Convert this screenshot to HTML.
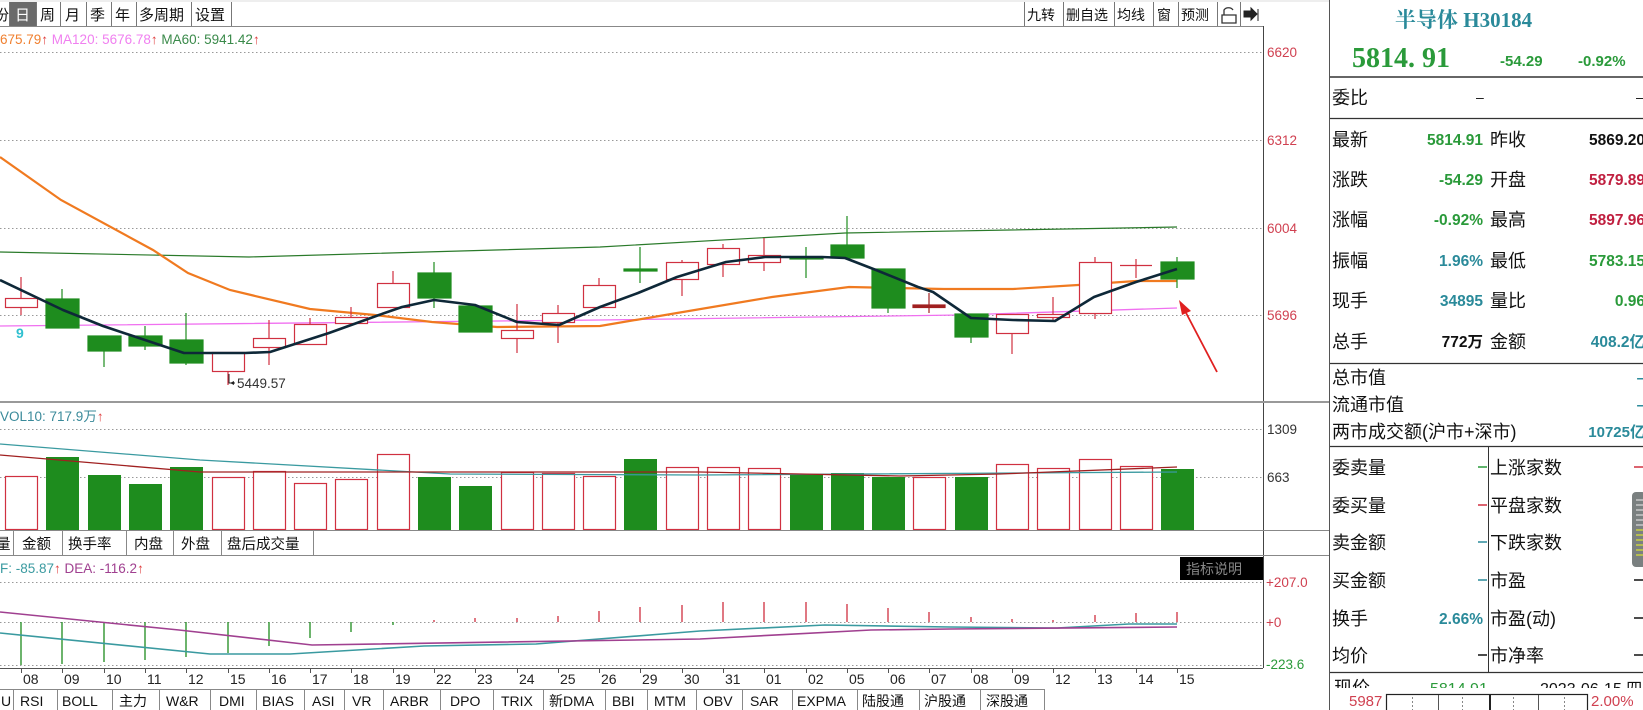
<!DOCTYPE html>
<html><head><meta charset="utf-8"><style>
html,body{margin:0;padding:0;background:#fff;width:1643px;height:710px;overflow:hidden}
svg{display:block}
.s{font-family:"Liberation Sans","Noto Sans CJK SC",sans-serif}
.c{font-family:"Liberation Sans","Noto Sans CJK SC",sans-serif}
</style></head><body>
<svg width="1643" height="710" viewBox="0 0 1643 710" xmlns="http://www.w3.org/2000/svg" class="s">
<rect x="0" y="0" width="1643" height="710" fill="#fff"/>
<rect x="0" y="0" width="1329" height="2" fill="#eee"/>
<!-- toolbar -->
<g font-size="15" fill="#111">
<rect x="10" y="2" width="26" height="24" fill="#6a6a6a"/>
<g stroke="#777" fill="none"><path d="M9.5 2v24M36.5 2v24M60.5 2v24M86.5 2v24M111.5 2v24M136.5 2v24M191.5 2v24M231.5 2v24M1024.5 2v24M1063.5 2v24M1114.5 2v24M1153.5 2v24M1178.5 2v24M1217.5 2v24M1240.5 2v24"/></g>
<text x="-6" y="20">份</text>
<text x="15" y="20" fill="#fff">日</text>
<text x="40" y="20">周</text>
<text x="65" y="20">月</text>
<text x="90" y="20">季</text>
<text x="115" y="20">年</text>
<text x="139" y="20">多周期</text>
<text x="195" y="20">设置</text>
<text x="1027" y="20" font-size="14">九转</text>
<text x="1066" y="20" font-size="14">删自选</text>
<text x="1117" y="20" font-size="14">均线</text>
<text x="1157" y="20" font-size="14">窗</text>
<text x="1181" y="20" font-size="14">预测</text>
</g>
<path d="M1222 23v-8h14v8zM1224 15v-5a5 4 0 0 1 9 0" fill="none" stroke="#333" stroke-width="1.3"/>
<path d="M1244 11h7v-3l6 6-6 6v-3h-7z M1258 9v12" fill="#222" stroke="#222" stroke-width="1"/>
<line x1="0" y1="26.5" x2="1263" y2="26.5" stroke="#888"/>
<line x1="1263.5" y1="26" x2="1263.5" y2="668" stroke="#444"/>
<!-- legend -->
<text x="0" y="44" font-size="13.5"><tspan fill="#f08030">675.79</tspan><tspan fill="#e04040">↑</tspan><tspan fill="#f080f0"> MA120: 5676.78</tspan><tspan fill="#e04040">↑</tspan><tspan fill="#3a8a4a"> MA60: 5941.42</tspan><tspan fill="#e04040">↑</tspan></text>
<!-- grid -->
<g stroke="#999" stroke-dasharray="1.5 2.5" stroke-width="1">
<line x1="0" y1="52.5" x2="1263" y2="52.5"/><line x1="0" y1="140.5" x2="1263" y2="140.5"/><line x1="0" y1="228.5" x2="1263" y2="228.5"/><line x1="0" y1="315.5" x2="1263" y2="315.5"/>
<line x1="0" y1="429.5" x2="1263" y2="429.5"/><line x1="0" y1="477.5" x2="1263" y2="477.5"/>
<line x1="0" y1="582.5" x2="1263" y2="582.5"/><line x1="0" y1="622.5" x2="1263" y2="622.5"/><line x1="0" y1="665.5" x2="1263" y2="665.5"/>
</g>
<g font-size="13.5" fill="#d04050">
<text x="1267" y="57">6620</text><text x="1267" y="145">6312</text><text x="1267" y="233">6004</text><text x="1267" y="320">5696</text>
</g>
<!-- MA lines -->
<polyline fill="none" stroke="#2a7a2a" stroke-width="1.2" points="0,252 249,257 600,247 845,233 1177,227"/>
<polyline fill="none" stroke="#f070f0" stroke-width="1.3" points="0,326 600,320 960,315 1177,308"/>
<polyline fill="none" stroke="#f07a20" stroke-width="2.2" points="0,157 61,200 153,250 188,273 230,290 310,309 375,315 432,322 497,327 600,326 677,313 772,297 849,287 944,289 1013,289 1078,285 1136,281 1177,281"/>
<!-- candles -->
<g stroke-width="1.2">
<g stroke="#d03040" fill="#fff">
<line x1="21" y1="277" x2="21" y2="315"/><rect x="5.5" y="298.5" width="32" height="9"/>
<line x1="228" y1="352" x2="228" y2="385"/><rect x="212.5" y="352.5" width="32" height="19"/>
<line x1="269" y1="320" x2="269" y2="365"/><rect x="253.5" y="338.5" width="32" height="9"/>
<line x1="310" y1="318" x2="310" y2="344"/><rect x="294.5" y="324.5" width="32" height="20"/>
<line x1="351" y1="307" x2="351" y2="324"/><rect x="335.5" y="317.5" width="32" height="6"/>
<line x1="393" y1="271" x2="393" y2="307"/><rect x="377.5" y="283.5" width="32" height="24"/>
<line x1="517" y1="304" x2="517" y2="353"/><rect x="501.5" y="330.5" width="32" height="8"/>
<line x1="558" y1="305" x2="558" y2="343"/><rect x="542.5" y="313.5" width="32" height="9"/>
<line x1="599" y1="278" x2="599" y2="307"/><rect x="583.5" y="285.5" width="32" height="22"/>
<line x1="682" y1="260" x2="682" y2="296"/><rect x="666.5" y="262.5" width="32" height="17"/>
<line x1="723" y1="244" x2="723" y2="277"/><rect x="707.5" y="248.5" width="32" height="16"/>
<line x1="764" y1="238" x2="764" y2="271"/><rect x="748.5" y="255.5" width="32" height="7"/>
<line x1="1012" y1="314" x2="1012" y2="354"/><rect x="996.5" y="314.5" width="32" height="19"/>
<line x1="1053" y1="297" x2="1053" y2="320"/><rect x="1037.5" y="314.5" width="32" height="3"/>
<line x1="1095" y1="257" x2="1095" y2="319"/><rect x="1079.5" y="262.5" width="32" height="51"/>
<line x1="1136" y1="259" x2="1136" y2="278"/><line x1="1120" y1="265.5" x2="1152" y2="265.5"/>
</g>
<g stroke="#a02020" fill="#a02020"><line x1="929" y1="293" x2="929" y2="313"/><rect x="913" y="305" width="32" height="2.5"/></g>
<g stroke="#1e8c1e" fill="#1e8c1e">
<line x1="62" y1="289" x2="62" y2="328"/><rect x="46" y="299" width="33" height="29"/>
<line x1="104" y1="336" x2="104" y2="367"/><rect x="88" y="336" width="33" height="15"/>
<line x1="145" y1="326" x2="145" y2="350"/><rect x="129" y="336" width="33" height="10"/>
<line x1="186" y1="313" x2="186" y2="365"/><rect x="170" y="340" width="33" height="23"/>
<line x1="434" y1="262" x2="434" y2="308"/><rect x="418" y="273" width="33" height="25"/>
<line x1="475" y1="306" x2="475" y2="332"/><rect x="459" y="306" width="33" height="26"/>
<line x1="640" y1="247" x2="640" y2="283"/><rect x="624" y="269" width="33" height="2"/>
<line x1="806" y1="247" x2="806" y2="278"/><rect x="790" y="257" width="33" height="2"/>
<line x1="847" y1="216" x2="847" y2="245"/><rect x="831" y="245" width="33" height="13"/>
<line x1="888" y1="269" x2="888" y2="313"/><rect x="872" y="269" width="33" height="39"/>
<line x1="971" y1="314" x2="971" y2="343"/><rect x="955" y="314" width="33" height="23"/>
<line x1="1177" y1="257" x2="1177" y2="288"/><rect x="1161" y="262" width="33" height="17"/>
</g>
</g>
<polyline fill="none" stroke="#0e2838" stroke-width="2.6" stroke-linejoin="round" points="0,280 63,310 103,326 184,353 245,353 270,352 329,333 379,315 402,307 434,300 475,305 517,322 559,325 600,307 638,293 677,277 726,262 765,257 822,257 845,258 876,270 918,287 933,292 971,318 1013,320 1055,321 1094,297 1136,282 1177,269"/>
<text x="16" y="338" font-size="14" fill="#30c0d0" font-weight="bold">9</text>
<path d="M229 374v9h6" fill="none" stroke="#222" stroke-width="1"/><path d="M230 383l4 -2v4z" fill="#222"/>
<text x="237" y="388" font-size="13.5" fill="#333">5449.57</text>
<!-- arrow -->
<line x1="1217" y1="372" x2="1184" y2="309" stroke="#e02020" stroke-width="1.8"/>
<path d="M1179 300l12 11-9 4z" fill="#e02020"/>
<!-- volume panel -->
<line x1="0" y1="402" x2="1329" y2="402" stroke="#999" stroke-width="2"/>
<text x="0" y="421" font-size="13.5" fill="#3a8a9a">VOL10: 717.9万<tspan fill="#e04040">↑</tspan></text>
<text x="1267" y="434" font-size="13.5" fill="#333">1309</text>
<text x="1267" y="482" font-size="13.5" fill="#333">663</text>
<g stroke-width="1.2">
<g stroke="#d03040" fill="#fff">
<rect x="5.5" y="476.5" width="32" height="53"/><rect x="212.5" y="477.5" width="32" height="52"/><rect x="253.5" y="471.5" width="32" height="58"/><rect x="294.5" y="483.5" width="32" height="46"/><rect x="335.5" y="479.5" width="32" height="50"/><rect x="377.5" y="454.5" width="32" height="75"/><rect x="501.5" y="472.5" width="32" height="57"/><rect x="542.5" y="473.5" width="32" height="56"/><rect x="583.5" y="476.5" width="32" height="53"/><rect x="666.5" y="467.5" width="32" height="62"/><rect x="707.5" y="467.5" width="32" height="62"/><rect x="748.5" y="468.5" width="32" height="61"/><rect x="913.5" y="477.5" width="32" height="52"/><rect x="996.5" y="464.5" width="32" height="65"/><rect x="1037.5" y="468.5" width="32" height="61"/><rect x="1079.5" y="459.5" width="32" height="70"/><rect x="1120.5" y="466.5" width="32" height="63"/>
</g>
<g fill="#1e8c1e">
<rect x="46" y="457" width="33" height="73"/><rect x="88" y="475" width="33" height="55"/><rect x="129" y="484" width="33" height="46"/><rect x="170" y="467" width="33" height="63"/><rect x="418" y="477" width="33" height="53"/><rect x="459" y="486" width="33" height="44"/><rect x="624" y="459" width="33" height="71"/><rect x="790" y="475" width="33" height="55"/><rect x="831" y="473" width="33" height="57"/><rect x="872" y="477" width="33" height="53"/><rect x="955" y="477" width="33" height="53"/><rect x="1161" y="469" width="33" height="61"/>
</g>
</g>
<polyline fill="none" stroke="#3a9aa0" stroke-width="1.3" points="0,444 200,460 450,474 700,475 1177,472"/>
<polyline fill="none" stroke="#a02020" stroke-width="1.3" points="0,455 200,472 700,472 900,476 1000,474 1177,467"/>
<line x1="0" y1="530.5" x2="1329" y2="530.5" stroke="#888"/>
<!-- vol tabs -->
<line x1="0" y1="555.5" x2="1329" y2="555.5" stroke="#888"/>
<g font-size="14.5" fill="#111">
<g stroke="#888"><path d="M13.5 531v24M62.5 531v24M126.5 531v24M173.5 531v24M221.5 531v24M313.5 531v24"/></g>
<text x="-4" y="549">量</text><text x="22" y="549">金额</text><text x="68" y="549">换手率</text><text x="134" y="549">内盘</text><text x="181" y="549">外盘</text><text x="227" y="549">盘后成交量</text>
</g>
<!-- MACD -->
<text x="0" y="573" font-size="13.5"><tspan fill="#3a9aa0">F: -85.87</tspan><tspan fill="#e04040">↑</tspan><tspan fill="#a04090"> DEA: -116.2</tspan><tspan fill="#e04040">↑</tspan></text>
<rect x="1180" y="557" width="83" height="23" fill="#000"/>
<text x="1186" y="574" font-size="14" fill="#888">指标说明</text>
<g font-size="13.5"><text x="1266" y="587" fill="#d04050">+207.0</text><text x="1266" y="627" fill="#d04050">+0</text><text x="1266" y="669" fill="#2a9a3a">-223.6</text></g>
<g stroke-width="1.3">
<g stroke="#1e8c1e"><path d="M21 622V665M62 622V664M104 622V662M145 622V660M186 622V657M228 622V653M269 622V646M310 622V638M351 622V632M393 622V625"/></g>
<g stroke="#d03040"><path d="M434 622V620M475 622V618M517 622V618M558 622V616M599 622V611M640 622V607M682 622V605M723 622V602M764 622V602M806 622V602M847 622V604M888 622V608M929 622V612M971 622V617M1012 622V619M1053 622V620M1095 622V615M1136 622V613M1177 622V612"/></g>
</g>
<polyline fill="none" stroke="#3a9aa0" stroke-width="1.6" points="0,633 210,654 290,654 424,646 536,644 700,631 825,625 950,627 1057,628 1129,624 1177,624"/>
<polyline fill="none" stroke="#a04090" stroke-width="1.6" points="0,612 179,630 312,645 700,639 871,630 950,629 1177,627"/>
<line x1="0" y1="668.5" x2="1263" y2="668.5" stroke="#555"/>
<!-- dates -->
<g stroke="#555"><path d="M21.5 669v4M62.5 669v4M104.5 669v4M145.5 669v4M186.5 669v4M228.5 669v4M269.5 669v4M310.5 669v4M351.5 669v4M393.5 669v4M434.5 669v4M475.5 669v4M517.5 669v4M558.5 669v4M599.5 669v4M640.5 669v4M682.5 669v4M723.5 669v4M764.5 669v4M806.5 669v4M847.5 669v4M888.5 669v4M929.5 669v4M971.5 669v4M1012.5 669v4M1053.5 669v4M1095.5 669v4M1136.5 669v4M1177.5 669v4"/></g>
<g font-size="14" fill="#222">
<text x="23" y="684">08</text><text x="64" y="684">09</text><text x="106" y="684">10</text><text x="147" y="684">11</text><text x="188" y="684">12</text><text x="230" y="684">15</text><text x="271" y="684">16</text><text x="312" y="684">17</text><text x="353" y="684">18</text><text x="395" y="684">19</text><text x="436" y="684">22</text><text x="477" y="684">23</text><text x="519" y="684">24</text><text x="560" y="684">25</text><text x="601" y="684">26</text><text x="642" y="684">29</text><text x="684" y="684">30</text><text x="725" y="684">31</text><text x="766" y="684">01</text><text x="808" y="684">02</text><text x="849" y="684">05</text><text x="890" y="684">06</text><text x="931" y="684">07</text><text x="973" y="684">08</text><text x="1014" y="684">09</text><text x="1055" y="684">12</text><text x="1097" y="684">13</text><text x="1138" y="684">14</text><text x="1179" y="684">15</text>
</g>
<!-- bottom tabs -->
<line x1="0" y1="689.5" x2="1045" y2="689.5" stroke="#888"/>
<g stroke="#888"><path d="M13.5 690v20M57.5 690v20M112.5 690v20M159.5 690v20M210.5 690v20M256.5 690v20M304.5 690v20M344.5 690v20M383.5 690v20M440.5 690v20M493.5 690v20M543.5 690v20M605.5 690v20M647.5 690v20M696.5 690v20M742.5 690v20M792.5 690v20M857.5 690v20M919.5 690v20M980.5 690v20M1044.5 690v20"/></g>
<g font-size="14" fill="#111">
<text x="1" y="706">U</text><text x="20" y="706">RSI</text><text x="62" y="706">BOLL</text><text x="119" y="706">主力</text><text x="166" y="706">W&amp;R</text><text x="219" y="706">DMI</text><text x="262" y="706">BIAS</text><text x="312" y="706">ASI</text><text x="352" y="706">VR</text><text x="390" y="706">ARBR</text><text x="450" y="706">DPO</text><text x="501" y="706">TRIX</text><text x="549" y="706">新DMA</text><text x="612" y="706">BBI</text><text x="654" y="706">MTM</text><text x="703" y="706">OBV</text><text x="750" y="706">SAR</text><text x="797" y="706">EXPMA</text><text x="862" y="706">陆股通</text><text x="924" y="706">沪股通</text><text x="986" y="706">深股通</text>
</g>
<!-- right panel -->
<line x1="1329.5" y1="0" x2="1329.5" y2="710" stroke="#555"/>
<text x="1395" y="27" font-size="21" font-weight="bold" fill="#2a8a9a" font-family="'Liberation Serif','Noto Serif CJK SC',serif">半导体 H30184</text>
<text x="1352" y="67" font-size="28" fill="#2a9a3a" font-family="'Liberation Serif','Noto Serif CJK SC',serif" font-weight="bold">5814. 91</text>
<text x="1500" y="66" font-size="15" fill="#2a9a3a" font-weight="bold">-54.29</text>
<text x="1578" y="66" font-size="15" fill="#2a9a3a" font-weight="bold">-0.92%</text>
<line x1="1330" y1="77" x2="1643" y2="77" stroke="#333" stroke-width="1.5"/>
<g font-size="18" fill="#111">
<text x="1332" y="104">委比</text>
<text x="1476" y="102" font-size="14">–</text><text x="1636" y="102" font-size="14">–</text>
</g>
<line x1="1330" y1="118.5" x2="1643" y2="118.5" stroke="#333" stroke-width="1.2"/>
<g font-size="18" fill="#111">
<text x="1332" y="146">最新</text><text x="1490" y="146">昨收</text>
<text x="1332" y="186">涨跌</text><text x="1490" y="186">开盘</text>
<text x="1332" y="226">涨幅</text><text x="1490" y="226">最高</text>
<text x="1332" y="267">振幅</text><text x="1490" y="267">最低</text>
<text x="1332" y="307">现手</text><text x="1490" y="307">量比</text>
<text x="1332" y="348">总手</text><text x="1490" y="348">金额</text>
</g>
<g font-size="15.5" font-weight="bold" text-anchor="end">
<text x="1483" y="145" fill="#2a9a3a">5814.91</text><text x="1645" y="145" fill="#111">5869.20</text>
<text x="1483" y="185" fill="#2a9a3a">-54.29</text><text x="1645" y="185" fill="#c02040">5879.89</text>
<text x="1483" y="225" fill="#2a9a3a">-0.92%</text><text x="1645" y="225" fill="#c02040">5897.96</text>
<text x="1483" y="266" fill="#2a8a9a">1.96%</text><text x="1645" y="266" fill="#2a9a3a">5783.15</text>
<text x="1483" y="306" fill="#2a8a9a">34895</text><text x="1645" y="306" fill="#2a9a3a">0.96</text>
<text x="1483" y="347" fill="#111">772万</text><text x="1645" y="347" fill="#2a8a9a">408.2亿</text>
</g>
<line x1="1330" y1="363.5" x2="1643" y2="363.5" stroke="#333" stroke-width="1.2"/>
<g font-size="18" fill="#111">
<text x="1332" y="384">总市值</text>
<text x="1332" y="411">流通市值</text>
<text x="1332" y="438">两市成交额(沪市+深市)</text>
</g>
<g font-size="15" fill="#2a8a9a" text-anchor="end" font-weight="bold">
<text x="1645" y="383">–</text><text x="1645" y="410">–</text><text x="1645" y="437">10725亿</text>
</g>
<line x1="1330" y1="446.5" x2="1643" y2="446.5" stroke="#333" stroke-width="1.2"/>
<line x1="1488.5" y1="447" x2="1488.5" y2="672" stroke="#333"/>
<g font-size="18" fill="#111">
<text x="1332" y="474">委卖量</text><text x="1490" y="474">上涨家数</text>
<text x="1332" y="512">委买量</text><text x="1490" y="512">平盘家数</text>
<text x="1332" y="549">卖金额</text><text x="1490" y="549">下跌家数</text>
<text x="1332" y="587">买金额</text><text x="1490" y="587">市盈</text>
<text x="1332" y="625">换手</text><text x="1490" y="625">市盈(动)</text>
<text x="1332" y="662">均价</text><text x="1490" y="662">市净率</text>
</g>
<g stroke-width="1.5">
<line x1="1478" y1="467" x2="1487" y2="467" stroke="#2a9a3a"/>
<line x1="1478" y1="505" x2="1487" y2="505" stroke="#d03040"/>
<line x1="1478" y1="542" x2="1487" y2="542" stroke="#2a8a9a"/>
<line x1="1478" y1="580" x2="1487" y2="580" stroke="#2a8a9a"/>
<line x1="1478" y1="655" x2="1487" y2="655" stroke="#111"/>
<line x1="1634" y1="467" x2="1643" y2="467" stroke="#d03040"/>
<line x1="1634" y1="580" x2="1643" y2="580" stroke="#111"/>
<line x1="1634" y1="618" x2="1643" y2="618" stroke="#111"/>
<line x1="1634" y1="655" x2="1643" y2="655" stroke="#111"/>
</g>
<text x="1483" y="624" font-size="15.5" font-weight="bold" fill="#2a8a9a" text-anchor="end">2.66%</text>
<rect x="1632" y="492" width="14" height="75" rx="4" fill="#7a8080"/>
<path d="M1636 500h7M1636 505h7M1636 510h7M1636 515h7M1636 520h7M1636 525h7" stroke="#c8c8c8" stroke-width="1.5"/>
<path d="M1636 530h7M1636 535h7M1636 540h7M1636 545h7M1636 550h7M1636 555h7" stroke="#c8d040" stroke-width="1.5"/>
<line x1="1330" y1="672.5" x2="1643" y2="672.5" stroke="#333" stroke-width="1.2"/>
<g font-size="18">
<text x="1334" y="694" fill="#111">现价</text>
<text x="1430" y="694" fill="#2a9a3a" font-size="16">5814.91</text>
<text x="1540" y="694" fill="#111" font-size="16">2023-06-15 四</text>
</g>
<rect x="1330" y="688" width="313" height="22" fill="#fff"/>
<text x="1349" y="706" font-size="15" fill="#d04050">5987</text>
<text x="1591" y="706" font-size="15" fill="#d04050">2.00%</text>
<rect x="1386.5" y="694.5" width="201" height="20" fill="#fff" stroke="#222" stroke-width="1.2"/>
<path d="M1438.5 695v15M1538.5 695v15" stroke="#555"/>
<path d="M1490 695v15" stroke="#222" stroke-width="2"/>
<path d="M1412.5 697v13M1462.5 697v13M1513.5 697v13M1564.5 697v13" stroke="#888" stroke-dasharray="2 2"/>
</svg>
</body></html>
